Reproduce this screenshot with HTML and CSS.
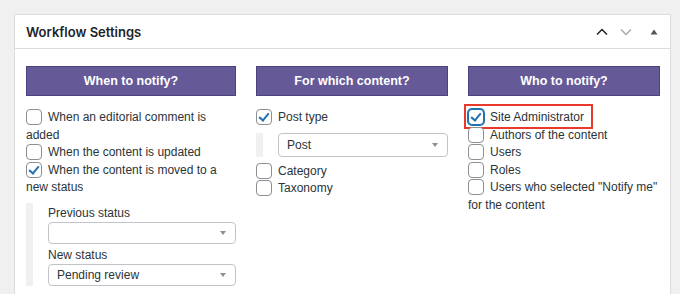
FILE: index.html
```html
<!DOCTYPE html>
<html lang="en">
<head>
  <meta charset="UTF-8" />
  <title>Workflow Settings</title>
  <link rel="stylesheet" href="styles.css">
</head>
<body>
  <div class="postbox">
    <div class="postbox-header">
      <h2>Workflow Settings</h2>
      <div class="handle-actions">
        <svg class="arrow up" width="14" height="10" viewBox="0 0 14 10"><path d="M2 7.5 L7 2.5 L12 7.5" fill="none" stroke="#1d2327" stroke-width="1.5"/></svg>
        <svg class="arrow down" width="14" height="10" viewBox="0 0 14 10"><path d="M2 2.5 L7 7.5 L12 2.5" fill="none" stroke="#a7aaad" stroke-width="1.5"/></svg>
        <svg class="toggle" width="10" height="8" viewBox="0 0 10 8"><path d="M1.5 6.5 L5 1.5 L8.5 6.5 Z" fill="#50575e"/></svg>
      </div>
    </div>

    <div class="inside">
      <div class="col col-when">
        <div class="col-title">When to notify?</div>
        <label class="opt"><span class="cb"></span>When an editorial comment is added</label>
        <label class="opt"><span class="cb"></span>When the content is updated</label>
        <label class="opt"><span class="cb checked"></span>When the content is moved to a new status</label>
        <div class="sub sub-status">
          <div class="field-label">Previous status</div>
          <div class="select"></div>
          <div class="field-label">New status</div>
          <div class="select">Pending review</div>
        </div>
      </div>

      <div class="col col-content">
        <div class="col-title">For which content?</div>
        <label class="opt"><span class="cb checked"></span>Post type</label>
        <div class="sub sub-post">
          <div class="select tall">Post</div>
        </div>
        <label class="opt"><span class="cb"></span>Category</label>
        <label class="opt"><span class="cb"></span>Taxonomy</label>
      </div>

      <div class="col col-who">
        <div class="col-title">Who to notify?</div>
        <label class="opt highlight"><span class="cb checked focus"></span>Site Administrator</label>
        <label class="opt"><span class="cb"></span>Authors of the content</label>
        <label class="opt"><span class="cb"></span>Users</label>
        <label class="opt"><span class="cb"></span>Roles</label>
        <label class="opt"><span class="cb"></span>Users who selected "Notify me" for the content</label>
      </div>
    </div>
  </div>
</body>
</html>
```

FILE: styles.css
```css
/* base */
body {
  margin: 0;
  padding: 14px 9px 0 14px;
  background: #f0f0f1;
  color: #1d2327;
  font-family: "Liberation Sans", Arial, sans-serif;
  font-size: 12px;
  height: 294px;
  box-sizing: border-box;
  overflow: hidden;
}

/* box */
.postbox {
  background: #fff;
  border: 1px solid #dcdcde;
  height: 300px;
  box-sizing: border-box;
}

.postbox-header {
  display: flex;
  align-items: center;
  justify-content: space-between;
  height: 33px;
  border-bottom: 1px solid #dcdcde;
  padding: 0 11px 0 11px;
}

.postbox-header h2 {
  margin: 0;
  font-family: Inter, "Noto Sans", sans-serif;
  font-size: 13px;
  font-weight: 600;
  color: #1d2327;
}

.handle-actions {
  display: flex;
  align-items: center;
}

.handle-actions .arrow {
  margin-left: 10px;
}

.handle-actions .toggle {
  margin-left: 16px;
}

/* columns */
.inside {
  display: grid;
  grid-template-columns: 210px 192px 192px;
  column-gap: 20px;
  padding: 17px 11px 0 11px;
}

.col-title {
  height: 28px;
  line-height: 28px;
  background: #655997;
  border: 1px solid #4b4380;
  color: #fff;
  font-weight: bold;
  font-size: 12.5px;
  text-align: center;
  margin-bottom: 13px;
}

.opt {
  display: block;
  line-height: 17.6px;
  color: #2c3338;
}

.cb {
  display: inline-block;
  width: 14px;
  height: 14px;
  border: 1px solid #8c8f94;
  border-radius: 4px;
  margin-right: 6px;
  vertical-align: -4px;
  position: relative;
  background: #fff;
}

.cb.checked::after {
  content: "";
  position: absolute;
  left: 4px;
  top: 1px;
  width: 4px;
  height: 8px;
  border: solid #2271b1;
  border-width: 0 2px 2px 0;
  transform: rotate(40deg);
}

.cb.focus {
  border-color: #2271b1;
  box-shadow: 0 0 0 1px #2271b1;
}

/* red marker drawn over the first recipient */
.highlight {
  position: relative;
}

.highlight::before {
  content: "";
  position: absolute;
  left: -4px;
  top: -5px;
  width: 125px;
  height: 21px;
  border: 2px solid #e8392c;
}

/* sub blocks */
.sub {
  border-left: 7px solid #f0f0f1;
  padding-left: 15px;
}

.sub-status {
  margin-top: 6px;
  padding-top: 2px;
}

.sub-post {
  margin: 6px 0 6px;
}

.field-label {
  line-height: 16px;
  color: #2c3338;
  margin-bottom: 1px;
}

.select {
  position: relative;
  height: 20px;
  line-height: 20px;
  border: 1px solid #c3c4c7;
  border-radius: 4px;
  padding-left: 8px;
  color: #2c3338;
  margin-bottom: 3px;
}

.select.tall {
  height: 22px;
  line-height: 22px;
  margin-bottom: 0;
}

.select::after {
  content: "";
  position: absolute;
  right: 9px;
  top: 50%;
  margin-top: -2px;
  border-left: 3px solid transparent;
  border-right: 3px solid transparent;
  border-top: 4px solid #8c8f94;
}
```
